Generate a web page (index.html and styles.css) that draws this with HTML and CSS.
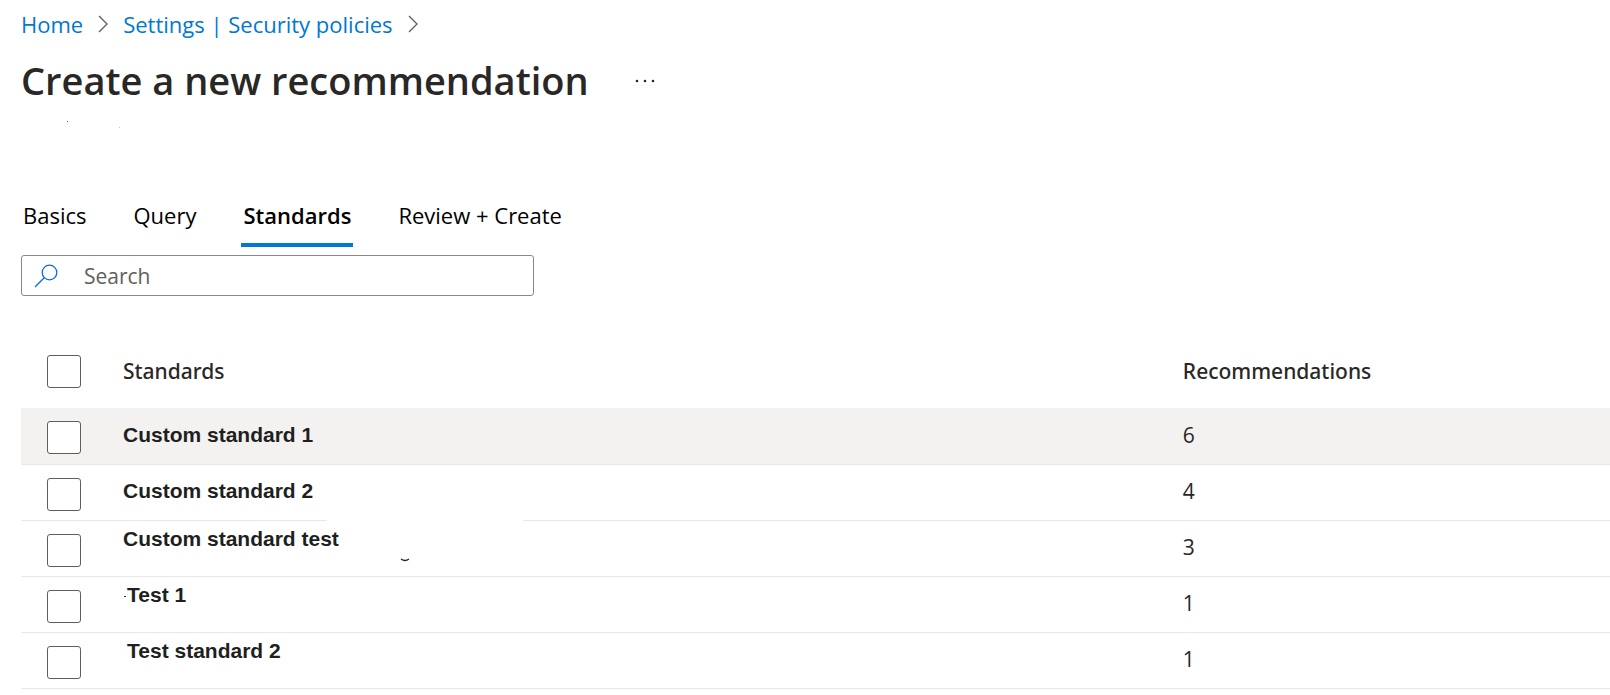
FILE: index.html
```html
<!DOCTYPE html>
<html lang="en">
<head>
<meta charset="utf-8">
<title>Create a new recommendation</title>
<link rel="stylesheet" href="styles.css">
</head>
<body>
<header class="page-header">
  <nav class="breadcrumb" aria-label="Breadcrumb">
    <a href="#">Home</a>
    <svg class="chevron" viewBox="0 0 10 18" aria-hidden="true"><path d="M1 1l8 8-8 8"/></svg>
    <a href="#">Settings | Security policies</a>
    <svg class="chevron" viewBox="0 0 10 18" aria-hidden="true"><path d="M1 1l8 8-8 8"/></svg>
  </nav>
  <div class="title-row">
    <h1>Create a new recommendation</h1>
    <button class="more" type="button" aria-label="More actions">
      <svg viewBox="0 0 20 4" aria-hidden="true"><circle cx="2" cy="2" r="1.3"/><circle cx="10" cy="2" r="1.3"/><circle cx="18" cy="2" r="1.3"/></svg>
    </button>
  </div>
  <svg class="specks" viewBox="0 0 100 8" aria-hidden="true"><path class="dark" d="M0 0h1v1h-1z"/><path class="light" d="M52 6h1v1h-1z"/></svg>
</header>
<main>
  <div class="tabs" role="tablist">
    <button class="tab" type="button" role="tab">Basics</button>
    <button class="tab" type="button" role="tab">Query</button>
    <button class="tab active" type="button" role="tab" aria-selected="true">Standards</button>
    <button class="tab" type="button" role="tab">Review + Create</button>
  </div>
  <label class="search">
    <svg viewBox="0 0 24 24" aria-hidden="true"><circle cx="15.5" cy="8.5" r="7.3"/><path d="M10.2 13.8L1 23"/></svg>
    <input type="search" placeholder="Search" aria-label="Search">
  </label>
  <table class="standards">
    <colgroup><col class="col-check"><col class="col-name"><col></colgroup>
    <thead>
      <tr><th><input type="checkbox" aria-label="Select all"></th><th>Standards</th><th>Recommendations</th></tr>
    </thead>
    <tbody>
      <tr class="hovered"><td><input type="checkbox" id="s1"></td><td class="name"><label for="s1">Custom standard 1</label></td><td class="count">6</td></tr>
      <tr><td><input type="checkbox" id="s2"></td><td class="name"><label for="s2">Custom standard 2</label><span class="line-gap"></span></td><td class="count">4</td></tr>
      <tr><td><input type="checkbox" id="s3"></td><td class="name raised"><label for="s3">Custom standard test</label><svg class="descender" viewBox="0 0 10 4" aria-hidden="true"><path d="M1 1q4 3 8 0"/></svg></td><td class="count">3</td></tr>
      <tr><td><input type="checkbox" id="s4"></td><td class="name raised indented"><span class="dot"></span><label for="s4">Test 1</label></td><td class="count">1</td></tr>
      <tr><td><input type="checkbox" id="s5"></td><td class="name raised indented"><label for="s5">Test standard 2</label></td><td class="count">1</td></tr>
    </tbody>
  </table>
</main>
</body>
</html>
```

FILE: styles.css
```css
* {
  box-sizing: border-box;
}

body {
  margin: 0;
  background: #fff;
  color: #292827;
  font-family: "Open Sans", "Noto Sans", sans-serif;
  font-size: 21px;
}

button,
input {
  font: inherit;
}

.page-header {
  position: relative;
  padding: 8px 21px 0;
}

.breadcrumb {
  display: flex;
  align-items: center;
  gap: 15px;
  font-size: 22px;
  line-height: 32px;
}

.breadcrumb a {
  color: #0078d4;
  text-decoration: none;
}

.chevron {
  width: 10px;
  height: 18px;
  fill: none;
  stroke: #605e5c;
  stroke-width: 1.3;
}

.title-row {
  display: flex;
  align-items: center;
  gap: 42px;
  margin-top: 12px;
}

h1 {
  margin: 0;
  font-size: 38px;
  font-weight: 600;
  line-height: 56px;
}

.more {
  display: flex;
  padding: 6px 4px 4px;
  border: 0;
  background: none;
}

.more svg {
  width: 20px;
  height: 4px;
  fill: #292827;
}

.specks {
  position: absolute;
  top: 121px;
  left: 67px;
  width: 100px;
  height: 8px;
}

.dark {
  fill: #605e5c;
}

.light {
  fill: #c8c6c4;
}

main {
  padding: 84px 0 0 21px;
}

.tabs {
  display: flex;
  gap: 43px;
  font-size: 22px;
}

.tab {
  height: 55px;
  padding: 0 2px 6px;
  border: 0;
  border-bottom: 4px solid transparent;
  background: none;
  color: #000;
}

.tab.active {
  border-bottom-color: #0078d4;
  font-weight: 600;
}

.search {
  display: flex;
  align-items: center;
  gap: 26px;
  width: 513px;
  max-width: 100%;
  height: 41px;
  margin-top: 8px;
  padding: 0 12px;
  border: 1px solid #8a8886;
  border-radius: 3px;
}

.search svg {
  flex: none;
  width: 24px;
  height: 24px;
  fill: none;
  stroke: #0f6cd6;
  stroke-width: 1.3;
}

.search input {
  flex: 1;
  min-width: 0;
  padding: 0;
  border: 0;
  outline: 0;
  background: none;
}

.search input::placeholder {
  color: #605e5c;
  opacity: 1;
}

.standards {
  width: 100%;
  margin-top: 38px;
  border-collapse: separate;
  border-spacing: 0;
  table-layout: fixed;
}

.col-check {
  width: 102px;
}

.col-name {
  width: 66.7%;
}

th,
td {
  padding: 0;
  text-align: left;
  line-height: 30px;
}

th {
  height: 74px;
  font-family: "Noto Sans", "Open Sans", sans-serif;
  font-weight: 500;
}

td {
  position: relative;
  height: 56px;
  border-bottom: 1px solid #e8e8e8;
}

th:first-child,
td:first-child {
  padding-left: 26px;
}

td:first-child {
  padding-top: 3px;
}

.hovered {
  background: #f3f2f0;
}

.hovered td {
  height: 57px;
}

.name {
  color: #1f1f1f;
  font-family: "Liberation Sans", Arial, sans-serif;
  font-weight: 700;
}

.name,
.count {
  padding-bottom: 3px;
}

.name.raised {
  padding-bottom: 20px;
}

.indented {
  padding-left: 4px;
}

input[type="checkbox"] {
  display: block;
  width: 34px;
  height: 33px;
  margin: 0;
  border: 1px solid #605e5c;
  border-radius: 3px;
  background: #fff;
  appearance: none;
}

.line-gap {
  position: absolute;
  bottom: -1px;
  left: 204px;
  width: 196px;
  height: 1px;
  background: #fff;
}

.descender {
  position: absolute;
  bottom: 14px;
  left: 277px;
  width: 10px;
  height: 4px;
  fill: none;
  stroke: #292827;
  stroke-width: 1.3;
}

.dot {
  position: absolute;
  top: 19px;
  left: 1px;
  width: 2px;
  height: 1px;
  background: #292827;
}
```
